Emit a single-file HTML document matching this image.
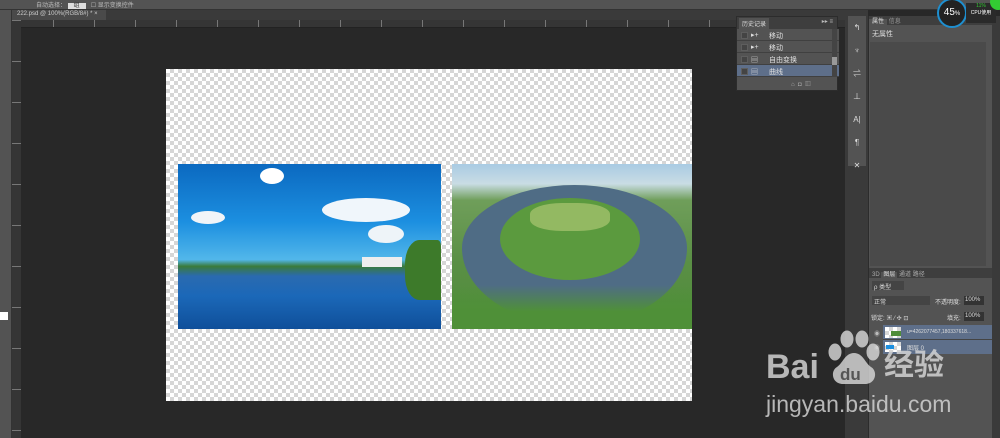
<!DOCTYPE html><html><head><meta charset="utf-8"><style>
*{margin:0;padding:0;box-sizing:border-box}
body{width:1000px;height:438px;overflow:hidden;background:#282828;position:relative;font-family:"Liberation Sans","Noto Sans CJK SC",sans-serif;font-size:7px;color:#ddd}
.a{position:absolute}
.chk{background:#fff;background-image:conic-gradient(#d6d6d6 25%,#fff 0 50%,#d6d6d6 0 75%,#fff 0);background-size:8px 8px}
.row{position:absolute;left:0;right:0;height:12px;border-bottom:1px solid #404040;background:#535353}
.row .cb{position:absolute;left:4px;top:3px;width:7px;height:7px;background:#444;border:1px solid #5e5e5e}
.row span{position:absolute;left:32px;top:2px;color:#e0e0e0}
.wm{color:rgba(215,215,215,.82)}
</style></head><body>
<div class="a" style="left:0;top:0;width:1000px;height:10px;background:#535353;border-bottom:1px solid #333"></div>
<div class="a" style="left:36px;top:0;font-size:6px;color:#bbb">自动选择： <span style="background:#ddd;color:#333;padding:0 6px">组</span> &nbsp; ☐ 显示变换控件</div>
<div class="a" style="left:0;top:10px;width:845px;height:10px;background:#3a3a3a"></div>
<div class="a" style="left:12px;top:10px;width:94px;height:10px;background:#4a4a4a;color:#ccc;font-size:6px;padding:1px 5px">222.psd @ 100%(RGB/8#) * ×</div>
<div class="a" style="left:12px;top:20px;width:833px;height:8px;background:#353535;background-image:repeating-linear-gradient(90deg,#777 0 1px,transparent 1px 41px);border-bottom:1px solid #222"></div>
<div class="a" style="left:12px;top:20px;width:9px;height:418px;background:#353535;background-image:repeating-linear-gradient(180deg,#777 0 1px,transparent 1px 41px)"></div>
<div class="a" style="left:0;top:10px;width:12px;height:428px;background:#535353;border-right:1px solid #333"></div>
<div class="a" style="left:0;top:312px;width:8px;height:8px;background:#fff"></div>
<div class="a chk" style="left:166px;top:69px;width:526px;height:332px"></div>
<div class="a" style="left:178px;top:164px;width:263px;height:165px;background:linear-gradient(180deg,#0b69c0 0%,#1c8fe0 35%,#52b7ea 58%,#3a7b3a 62%,#2a6ab0 68%,#1b68b8 80%,#0f4f9a 100%)"></div>
<div class="a" style="left:260px;top:168px;width:24px;height:16px;background:#fff;border-radius:50%"></div>
<div class="a" style="left:322px;top:198px;width:88px;height:24px;background:#f0f6fb;border-radius:50%"></div>
<div class="a" style="left:191px;top:211px;width:34px;height:13px;background:#f0f4f8;border-radius:50%"></div>
<div class="a" style="left:368px;top:225px;width:36px;height:18px;background:#eef4f8;border-radius:50%"></div>
<div class="a" style="left:362px;top:257px;width:40px;height:10px;background:#eee"></div>
<div class="a" style="left:405px;top:240px;width:36px;height:60px;background:#3d7a2a;border-radius:40% 10% 0 40%"></div>
<div class="a" style="left:452px;top:164px;width:240px;height:165px;background:linear-gradient(180deg,#a9cbe3 0%,#c9dce4 12%,#6f9e5a 22%,#5a8f45 60%,#4f8d3a 100%)"></div>
<div class="a" style="left:462px;top:185px;width:225px;height:140px;border-radius:50% 50% 50% 50%/45% 45% 55% 55%;background:#4f6c85"></div>
<div class="a" style="left:500px;top:198px;width:140px;height:82px;border-radius:50%;background:#5b9a3e"></div>
<div class="a" style="left:530px;top:203px;width:80px;height:28px;border-radius:40%;background:#93b962"></div>
<div class="a" style="left:452px;top:285px;width:240px;height:44px;background:linear-gradient(180deg,transparent,#4f9038 60%);"></div>
<div class="a" style="left:736px;top:16px;width:102px;height:75px;background:#535353;border:1px solid #2c2c2c">
 <div class="a" style="left:0;top:0;width:100px;height:12px;background:#3e3e3e"><span class="a" style="left:2px;top:1px;background:#535353;padding:1px 3px;color:#ddd;font-size:6px">历史记录</span><span class="a" style="right:4px;top:1px;color:#bbb;font-size:6px">▸▸ ≡</span></div>
 <div style="position:absolute;left:0;top:12px;width:102px;height:48px">
  <div class="row" style="top:0"><div class="cb"></div><span style="left:14px">▸+</span><span>移动</span></div>
  <div class="row" style="top:12px"><div class="cb"></div><span style="left:14px">▸+</span><span>移动</span></div>
  <div class="row" style="top:24px"><div class="cb"></div><span style="left:14px">▤</span><span>自由变换</span></div>
  <div class="row" style="top:36px;background:#5e6f8a"><div class="cb"></div><span style="left:14px">▤</span><span>曲线</span></div>
 </div>
 <div class="a" style="right:0;top:12px;width:5px;height:48px;background:#444"><div style="margin-top:28px;height:8px;background:#999"></div></div>
 <div class="a" style="left:54px;top:62px;color:#aaa;font-size:6px">⌂ &nbsp;◘ &nbsp;▥</div>
</div>
<div class="a" style="left:845px;top:10px;width:23px;height:428px;background:#3a3a3a"></div>
<div class="a" style="left:848px;top:16px;width:18px;height:150px;background:#535353;color:#ddd;font-size:8px;text-align:center;line-height:23px">↰<br>♆<br>⇌<br>⊥<br>A|<br>¶<br>✕</div>
<div class="a" style="left:868px;top:16px;width:124px;height:252px;background:#535353;border-left:1px solid #2c2c2c">
 <div style="height:9px;background:#3e3e3e;font-size:6px"><span style="background:#535353;padding:0 3px">属性</span> <span style="color:#999">信息</span></div>
 <div style="padding:4px 3px;font-size:7px">无属性</div>
 <div class="a" style="left:1px;top:26px;width:116px;height:224px;background:#4a4a4a"></div>
</div>
<div class="a" style="left:868px;top:268px;width:124px;height:170px;background:#535353;border-left:1px solid #2c2c2c;font-size:6px">
 <div style="height:10px;background:#3e3e3e;color:#aaa;padding:1px 3px">3D <span style="background:#535353;color:#ddd;padding:0 2px">图层</span> 通道 路径</div>
 <div class="a" style="left:3px;top:13px;width:32px;height:9px;background:#444;color:#ddd;padding:1px 2px">ρ 类型</div>
 <div class="a" style="left:3px;top:28px;width:58px;height:9px;background:#444;padding:1px 2px">正常</div>
 <div class="a" style="left:66px;top:29px">不透明度:</div>
 <div class="a" style="left:95px;top:28px;width:20px;height:9px;background:#333;padding:1px">100%</div>
 <div class="a" style="left:2px;top:45px">锁定: ▣ ⁄ ✣ ⊡</div>
 <div class="a" style="left:78px;top:45px">填充:</div>
 <div class="a" style="left:95px;top:44px;width:20px;height:9px;background:#333;padding:1px">100%</div>
 <div class="a" style="left:14px;top:57px;width:110px;height:15px;background:#5e6f8a;border-bottom:1px solid #444"><div class="a chk" style="left:2px;top:2px;width:16px;height:11px"><div style="margin:4px 0 0 6px;width:10px;height:5px;background:#4f8d3a"></div></div><span class="a" style="left:24px;top:4px;color:#ddd;font-size:5px">u=4262077457,180337618...</span></div>
 <div class="a" style="left:14px;top:72px;width:110px;height:14px;background:#5e6f8a"><div class="a chk" style="left:2px;top:2px;width:16px;height:10px"><div style="margin:3px 0 0 1px;width:8px;height:4px;background:#1c8fe0"></div></div><span class="a" style="left:24px;top:3px;color:#ddd">图层 0</span></div>
 <div class="a" style="left:5px;top:61px;color:#bbb">◉</div><div class="a" style="left:5px;top:75px;color:#bbb">◉</div>
</div>
<div class="a" style="left:992px;top:16px;width:8px;height:422px;background:#3a3a3a"></div>
<div class="a" style="left:937px;top:-2px;width:30px;height:30px;border-radius:50%;background:#222;border:2px solid #1e8fd0;color:#fff;font-size:10px;text-align:center;line-height:26px">45<span style="font-size:6px">%</span></div>
<div class="a" style="left:966px;top:3px;width:30px;height:20px;background:#2a2a2a;color:#fff;font-size:5px;text-align:center"><span style="color:#3c3">11%</span><br>CPU使用</div>
<div class="a" style="left:990px;top:-6px;width:16px;height:16px;border-radius:50%;background:#3c3"></div>
<svg class="a" style="left:822px;top:330px" width="62" height="56" viewBox="0 0 60 56">
<g fill="rgba(215,215,215,.82)">
<ellipse cx="12" cy="22" rx="6.5" ry="8.5"/><ellipse cx="24" cy="9" rx="6.5" ry="8.5"/><ellipse cx="39" cy="9" rx="6.5" ry="8.5"/><ellipse cx="50" cy="22" rx="6.5" ry="8.5"/>
<path d="M31 23c-9 0-11 10-17 14-7 4-5 17 6 17h22c11 0 13-13 6-17-6-4-8-14-17-14z"/>
</g>
<text x="17" y="50" font-family="Liberation Sans" font-weight="bold" font-size="17" fill="#555">du</text>
</svg>
<div class="a wm" style="left:766px;top:349px;font-size:34px;font-weight:bold;line-height:36px">Bai</div>
<div class="a wm" style="left:884px;top:348px;font-size:30px;font-weight:bold;line-height:36px">经验</div>
<div class="a wm" style="left:766px;top:390px;font-size:23px;line-height:28px">jingyan.baidu.com</div>
</body></html>
